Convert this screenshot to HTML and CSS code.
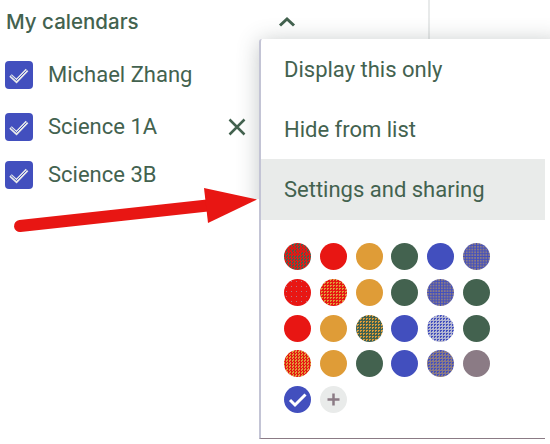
FILE: index.html
```html
<!DOCTYPE html>
<html lang="en">
<head>
<meta charset="utf-8">
<title>My calendars</title>
<link rel="stylesheet" href="styles.css">
</head>
<body>
<main class="page">
  <section class="sidebar">
    <header class="heading">
      <h1>My calendars</h1>
      <svg class="chevron" width="18" height="12" viewBox="0 0 18 12"><path d="M2 9.5 9 3l7 6.5"/></svg>
    </header>
    <ul class="calendars">
      <li><span class="box"><svg viewBox="0 0 28 28"><path class="tick" d="M5.5 14.5 11.5 20 22 9"/><path class="tick-core" d="M6 14.6 11.5 19.6 21.5 9.4"/></svg></span><span class="name n1">Michael Zhang</span></li>
      <li><span class="box"><svg viewBox="0 0 28 28"><path class="tick" d="M5.5 14.5 11.5 20 22 9"/><path class="tick-core" d="M6 14.6 11.5 19.6 21.5 9.4"/></svg></span><span class="name n2">Science 1A</span><svg class="close" width="18" height="18" viewBox="0 0 18 18"><path d="M1.5 1.5l15 15M16.5 1.5l-15 15"/></svg></li>
      <li><span class="box"><svg viewBox="0 0 28 28"><path class="tick" d="M5.5 14.5 11.5 20 22 9"/><path class="tick-core" d="M6 14.6 11.5 19.6 21.5 9.4"/></svg></span><span class="name n3">Science 3B</span></li>
    </ul>
  </section>
  <div class="divider"></div>
  <div class="shade"><div class="shade-cast"></div></div>
  <section class="menu">
    <div class="item"><span class="m1">Display this only</span></div>
    <div class="item"><span class="m2">Hide from list</span></div>
    <div class="item active"><span class="m3">Settings and sharing</span></div>
    <div class="palette">
      <i class="green mesh-red"><svg viewBox="0 0 27 27"><path class="streak" d="M5 5h7M17 5h4M3 8h5M12 8h10M7 11h10M21 11h4"/></svg></i><i class="red"></i><i class="amber"></i><i class="green"></i><i class="blue"></i><i class="blue dots-mauve"></i>
      <i class="red dots-faint"></i><i class="red dots-amber"></i><i class="amber"></i><i class="green"></i><i class="blue dots-mauve"></i><i class="green"></i>
      <i class="red"></i><i class="amber dots-red"></i><i class="green dots-amber"></i><i class="blue"></i><i class="lilac dots-blue"></i><i class="green"></i>
      <i class="amber mesh-red"></i><i class="amber"></i><i class="green"></i><i class="blue"></i><i class="mauve dots-blue"></i><i class="mauve"></i>
      <i class="blue"><svg viewBox="0 0 27 27"><path class="selected" d="M6 14 11 19 21.5 8.5"/></svg></i><i class="add"><svg viewBox="0 0 27 27"><path class="plus" d="M13.5 7.5v12M7.5 13.5h12"/></svg></i>
    </div>
  </section>
  <svg class="arrow" width="246" height="48" viewBox="0 0 246 48"><path class="shaft" d="M8 38 200 17"/><path class="head" d="M192 0 245 11.5 196 35Z"/></svg>
</main>
</body>
</html>
```
FILE: styles.css
```css
* { box-sizing: border-box; }
body { margin: 0; background: #fff; font-family: Roboto, "Liberation Sans", sans-serif; color: #43624f; }
.page { position: relative; width: 550px; height: 444px; overflow: hidden; }
svg { display: block; fill: none; }
.sidebar { width: 260px; }
.heading { display: flex; align-items: center; height: 43px; padding-left: 6px; }
h1 { width: 272px; margin: 0; font: 500 20.5px/42px Inter, sans-serif; white-space: nowrap; }
.heading h1 { flex: none; }
.chevron { flex: none; stroke: #43624f; stroke-width: 3; }
.calendars { list-style: none; margin: 18px 0 0; padding: 0 0 0 5px; display: grid; row-gap: 20px; }
.calendars li { display: flex; align-items: center; height: 28px; }
.calendars li:nth-child(2) { margin-top: 4px; }
.box { width: 28px; height: 28px; border-radius: 4px; background: #424fbe; }
.tick { stroke: #e9ebea; stroke-width: 3.6; }
.tick-core { stroke: #424fbe; stroke-width: 1; }
.name { width: 180px; margin-left: 15px; font-size: 22px; line-height: 28px; white-space: nowrap; }
.close { stroke: #43624f; stroke-width: 2.5; }
.divider { position: absolute; left: 428px; top: 0; width: 2px; height: 39px; background: #e8eaea; }
.shade { position: absolute; left: 225px; top: 10px; width: 325px; height: 189px; overflow: hidden; }
.shade-cast { margin: 29px 0 0 36px; width: 300px; height: 300px; border-radius: 4px; box-shadow: 0 4px 22px 2px rgba(70, 85, 85, .32); }
.menu { position: absolute; left: 259px; top: 39px; width: 286px; height: 400px; border-left: 2px solid #c3c4d5; border-bottom: 1px solid #8b7b85; border-radius: 3px 0 0 0; background: #fff; }
.item { display: flex; align-items: center; height: 60px; padding-left: 23px; font-size: 22px; white-space: nowrap; }
.item.active { height: 61px; background: #e9ebea; }
.palette { display: grid; grid-template-columns: repeat(6, 27px); grid-auto-rows: 27px; gap: 8.8px; padding: 23px 0 0 23px; }
.palette i { border-radius: 50%; overflow: hidden; }
.red { background-color: #e81613; }
.amber { background-color: #df9c37; }
.green { background-color: #43624f; }
.blue { background-color: #424fbe; }
.lilac { background-color: #b3b5d2; }
.mauve { background-color: #8b7b85; }
.add { background-color: #e9ebea; }
.dots-mauve, .dots-amber, .dots-red, .dots-blue, .dots-faint { background-image: conic-gradient(var(--dot) 25%, transparent 0); background-size: 3px 3px; }
.dots-mauve { --dot: #8b7b85; background-image: conic-gradient(transparent 75%, var(--dot) 0); background-size: 2.8px 2.8px; }
.dots-amber { --dot: #df9c37; }
.dots-red { --dot: #e81613; background-size: 4px 4px; background-image: radial-gradient(circle, var(--dot) .65px, transparent .7px); }
.dots-blue { --dot: #424fbe; }
.dots-faint { --dot: #b87983; background-size: 5px 5px; background-image: radial-gradient(circle, var(--dot) .65px, transparent .7px); }
.mesh-red { background-image: conic-gradient(#e81613 25%, transparent 0 50%, #e81613 0 75%, transparent 0); background-size: 3px 3px; }
.streak { stroke: #e81613; stroke-width: 1.5; }
.selected { stroke: #fff; stroke-width: 3; }
.plus { stroke: #8b7b85; stroke-width: 2.5; }
.arrow { position: absolute; left: 12px; top: 188px; }
.shaft { stroke: #e81613; stroke-width: 12; stroke-linecap: round; }
.head { fill: #e81613; }
```
